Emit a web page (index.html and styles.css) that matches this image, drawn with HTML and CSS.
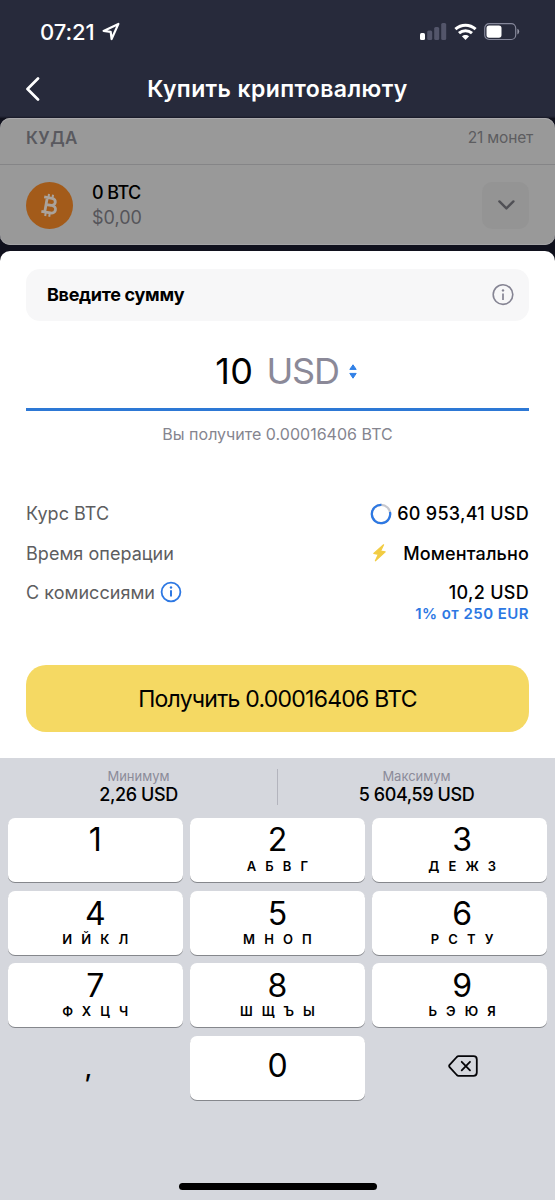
FILE: index.html
```html
<!DOCTYPE html>
<html lang="ru">
<head>
<meta charset="utf-8">
<title>Купить криптовалюту</title>
<link rel="stylesheet" href="styles.css">
</head>
<body>
<div class="phone">
  <header class="top">
    <div class="status">
      <div class="status-left">
        <span class="clock">07:21</span>
        <svg class="locate" width="18" height="19" viewBox="0 0 18 19"><path d="M1.6 9 16.4 1.9 9.6 17 8.7 9.9Z" fill="none" stroke="#fff" stroke-width="2.2" stroke-linejoin="round"/></svg>
      </div>
      <div class="status-right">
        <svg width="27" height="18" viewBox="0 0 27 18"><rect x="0" y="10" width="5" height="7" rx="1.5" fill="#fff"/><g fill="#53556a"><rect x="7.2" y="7.4" width="5" height="9.6" rx="1.5"/><rect x="14.2" y="4" width="5" height="13" rx="1.5"/><rect x="21.2" y="0" width="5" height="17" rx="1.5"/></g></svg>
        <svg width="23" height="18" viewBox="0 0 23 18"><g fill="none" stroke="#fff" stroke-width="3"><path d="M1.4 6.2C7.2.8 15.8.8 21.6 6.2"/><path d="M5 10.2C8.8 6.8 14.2 6.8 18 10.2"/></g><path d="M11.5 17 7.9 13.3C10 11.4 13 11.4 15.1 13.3Z" fill="#fff"/></svg>
        <svg width="36" height="18" viewBox="0 0 36 18"><rect x=".7" y=".7" width="31" height="15.8" rx="4.5" fill="none" stroke="#85879a" stroke-width="1.2"/><rect x="2.5" y="2.4" width="15" height="12.3" rx="2.6" fill="#fff"/><path d="M33.4 5.8Q35.2 6.6 35.2 8.6T33.4 11.4Z" fill="#9496a5"/></svg>
      </div>
    </div>
    <div class="nav">
      <svg class="back" width="16" height="24" viewBox="0 0 16 24"><path d="M12 1.5 1.5 12 12 22.5" fill="none" stroke="#fff" stroke-width="2.7" stroke-linecap="round" stroke-linejoin="round"/></svg>
      <h1 class="title">Купить криптовалюту</h1>
    </div>
  </header>

  <section class="wallet">
    <div class="wallet-head"><span class="where">КУДА</span><span class="coins">21 монет</span></div>
    <div class="wallet-row">
      <svg class="coin" width="47" height="47" viewBox="0 0 47 47"><circle cx="23.5" cy="23.5" r="23.5" fill="#a35b1a"/><g transform="translate(23.3 23.4) rotate(10) scale(.93)" fill="none" stroke="#aaa39c" stroke-width="3"><path d="M-7-8H1.5C7.2-8 7.2-.4 1.5-.4H-3H2.5C9 -.4 9 7.8 2.5 7.8H-7.3M-3.6-8V7.8" stroke-linejoin="round"/><path d="M-2.4-12V-8M2-12V-8M-2.4 8V12M2 8V12" stroke-width="2.2"/></g></svg>
      <div class="balance"><span class="amount-btc">0 BTC</span><span class="amount-fiat">$0,00</span></div>
      <div class="drop"><svg width="18" height="12" viewBox="0 0 18 12"><path d="M2.4 2.4 9.4 9.4 16.4 2.4" fill="none" stroke="#505055" stroke-width="2.4" stroke-linecap="round" stroke-linejoin="round"/></svg></div>
    </div>
  </section>

  <main class="sheet">
    <div class="prompt">
      <span class="prompt-text">Введите сумму</span>
      <svg width="22" height="22" viewBox="0 0 22 22"><circle cx="11" cy="10.6" r="9.8" fill="none" stroke="#858493" stroke-width="1.6"/><path d="M11 9.6V16" stroke="#858493" stroke-width="1.7"/><circle cx="11" cy="6.4" r="1.2" fill="#858493"/></svg>
    </div>
    <div class="entry">
      <span class="entry-num">10</span><span class="entry-cur">USD</span>
      <svg width="8" height="15" viewBox="0 0 8 15"><g fill="#3180e6" stroke="#3180e6" stroke-width="1" stroke-linejoin="round"><path d="M4 .8 7.2 5.4H.8Z"/><path d="M4 14.2.8 9.4H7.2Z"/></g></svg>
    </div>
    <p class="receive">Вы получите 0.00016406 BTC</p>
    <div class="details">
      <div class="line"><span class="label">Курс BTC</span><span class="value"><svg class="ring" width="22" height="22" viewBox="0 0 22 22"><circle cx="11" cy="11" r="9.2" fill="none" stroke="#c6c7ce" stroke-width="2.2"/><path d="M11.4 1.8A9.2 9.2 0 1 0 20 9" fill="none" stroke="#2d78e3" stroke-width="2.2"/></svg><b>60 953,41 USD</b></span></div>
      <div class="line"><span class="label">Время операции</span><span class="value instant"><svg class="bolt" width="15" height="18" viewBox="0 0 15 18"><path d="M11.6.8 1.8 9.4 6.4 10.3 3.4 16.8 13.2 7.9 8.6 7.1Z" fill="#f2cc43" stroke="#f2cc43" stroke-width="1.2" stroke-linejoin="round"/></svg><b>Моментально</b></span></div>
      <div class="line"><span class="label">С комиссиями</span><svg class="info" width="22" height="22" viewBox="0 0 22 22"><circle cx="11" cy="11" r="9.4" fill="none" stroke="#2d78e3" stroke-width="1.8"/><path d="M11 9.2V15.6" stroke="#2d78e3" stroke-width="2"/><circle cx="11" cy="6.5" r="1.2" fill="#2d78e3"/></svg><span class="value"><b>10,2 USD</b></span></div>
      <div class="fee">1% от 250 EUR</div>
    </div>
    <div class="submit"><span>Получить 0.00016406 BTC</span></div>
  </main>

  <footer class="keyboard">
    <div class="limits">
      <div class="limit"><span class="limit-name">Минимум</span><span class="limit-value">2,26 USD</span></div>
      <div class="limit"><span class="limit-name">Максимум</span><span class="limit-value">5 604,59 USD</span></div>
    </div>
    <div class="keys">
      <div class="key first"><b>1</b></div>
      <div class="key first"><b>2</b><i>АБВГ</i></div>
      <div class="key first right"><b>3</b><i>ДЕЖЗ</i></div>
      <div class="key"><b>4</b><i>ИЙКЛ</i></div>
      <div class="key"><b>5</b><i>МНОП</i></div>
      <div class="key right"><b>6</b><i>РСТУ</i></div>
      <div class="key"><b>7</b><i>ФХЦЧ</i></div>
      <div class="key"><b>8</b><i>ШЩЪЫ</i></div>
      <div class="key right"><b>9</b><i>ЬЭЮЯ</i></div>
      <div class="key plain comma">,</div>
      <div class="key zero"><b>0</b></div>
      <div class="key plain"><svg width="30" height="22" viewBox="0 0 30 22"><path d="M10.5 1.2H25.5Q28.8 1.2 28.8 4.5V17.5Q28.8 20.8 25.5 20.8H10.5Q9.6 20.8 8.8 20L1.6 12.2Q.7 11 1.6 9.8L8.8 2Q9.6 1.2 10.5 1.2Z" fill="none" stroke="#050508" stroke-width="1.8"/><path d="M13.7 6.8 22 15.3M22 6.8 13.7 15.3" stroke="#050508" stroke-width="1.8" stroke-linecap="round"/></svg></div>
    </div>
    <div class="home"></div>
  </footer>
</div>
</body>
</html>
```
FILE: styles.css
```css
* { box-sizing: border-box; }
body { margin: 0; font-family: Inter, "Liberation Sans", sans-serif; color: #000; }
h1, p { margin: 0; }
b, i { font-weight: inherit; font-style: normal; }
svg { display: block; flex: none; }
span, b, i, p, h1 { white-space: nowrap; }

.phone { width: 555px; height: 1200px; overflow: hidden; display: flex; flex-direction: column; background: #10111d; }

.top { height: 118px; flex: none; background: linear-gradient(#272a3b 116px, #171825 118px); color: #fff; }
.status { height: 60px; padding: 19px 35px 0 40px; display: flex; justify-content: space-between; }
.status-left { display: flex; gap: 8px; }
.clock { font-size: 22px; line-height: 26px; font-weight: 500; letter-spacing: -0.1px; }
.locate { margin-top: 3px; }
.status-right { display: flex; gap: 7px; padding-top: 4px; }
.nav { height: 58px; padding: 0 26px; display: grid; grid-template-columns: 16px 1fr 16px; align-items: center; }
.title { font-size: 23px; line-height: 30px; font-weight: 600; letter-spacing: 0.4px; text-align: center; }

.wallet { height: 127px; flex: none; margin-bottom: 6px; background: #999; border-radius: 10px; box-shadow: inset 0 1px #aaa9ac, inset 0 -1px #a5a5a7; }
.wallet-head { height: 47px; padding: 0 22px 7px 26px; display: flex; align-items: center; justify-content: space-between; border-bottom: 1px solid #858587; }
.where { font-size: 17px; font-weight: 600; color: #59595f; letter-spacing: 0.4px; }
.coins { font-size: 15.5px; color: #5d5d60; letter-spacing: -0.2px; }
.wallet-row { height: 80px; padding: 0 26px; display: flex; align-items: center; }
.balance { display: flex; flex-direction: column; margin-left: 19px; font-size: 18px; line-height: 25px; }
.amount-btc { letter-spacing: -0.6px; font-weight: 500; }
.amount-fiat { color: #55555a; }
.drop { width: 47px; height: 47px; margin-left: auto; border-radius: 10px; background: #949494; display: grid; place-items: center; }

.sheet { height: 507px; flex: none; background: #fff; border-radius: 10px 10px 0 0; padding: 18px 26px 0; }
.prompt { height: 52px; border-radius: 14px; background: #f7f7f8; display: flex; align-items: center; justify-content: space-between; padding: 0 15px 0 21px; }
.prompt-text { font-size: 18px; font-weight: 700; letter-spacing: -0.3px; padding-bottom: 2px; }
.entry { height: 90px; border-bottom: 3px solid #2d78d5; display: flex; align-items: center; justify-content: center; padding: 13px 0 0 17px; font-size: 36px; line-height: 44px; }
.entry-num { letter-spacing: 0.4px; }
.entry-cur { color: #8b8998; margin: 0 10px 0 13px; letter-spacing: -1.2px; }
.receive { margin-top: 13px; text-align: center; font-size: 16px; line-height: 20px; color: #85858f; letter-spacing: 0.02px; }
.details { margin-top: 50px; height: 171px; font-size: 18px; color: #5d5d60; }
.line { height: 39.6px; display: flex; align-items: center; }
.label { letter-spacing: 0.04px; }
.value { display: flex; align-items: center; margin-left: auto; color: #000; font-weight: 500; letter-spacing: 0.28px; }
.instant { letter-spacing: 0.16px; }
.ring { margin-right: 5px; }
.bolt { margin-right: 16px; }
.info { margin: -1px 0 0 5px; }
.fee { text-align: right; font-size: 15px; line-height: 18px; font-weight: 600; color: #2d78e3; margin-top: -8px; letter-spacing: 0.45px; }
.submit { height: 67px; border-radius: 20px; background: #f5d963; display: grid; place-items: center; font-size: 23px; letter-spacing: -0.75px; }

.keyboard { flex: 1; background: #d5d7dd; }
.limits { height: 60px; display: grid; grid-template-columns: 277px 278px; padding-top: 11px; }
.limit { height: 36px; display: flex; flex-direction: column; align-items: center; }
.limit + .limit { border-left: 1px solid #b3b4bd; }
.limit-name { font-size: 13px; line-height: 15px; color: #8b8b99; }
.limit-value { font-size: 18px; line-height: 22px; font-weight: 500; letter-spacing: -0.4px; }
.keys { display: grid; grid-template-columns: repeat(3, 1fr); grid-auto-rows: 64px; gap: 8.5px 7.5px; padding: 0 8px; }
.key { background: #fff; border-radius: 7px; box-shadow: 0 1px 0 #85878c; display: flex; flex-direction: column; align-items: center; }
.key b { font-size: 32px; line-height: 34px; padding-top: 6px; height: 40px; }
.first b { padding-top: 5px; }
.key i { font-size: 13px; line-height: 16px; font-weight: 600; letter-spacing: 9.1px; margin-right: -9px; }
.right { padding-left: 5px; }
.zero b { padding-top: 13px; }
.plain { background: none; box-shadow: none; justify-content: center; padding: 0 0 4px 7px; }
.comma { font-size: 26px; font-weight: 500; padding: 0 14px 1px 0; }
.home { width: 198px; height: 7px; border-radius: 4px; background: #000; margin: 83px auto 0; }
```
